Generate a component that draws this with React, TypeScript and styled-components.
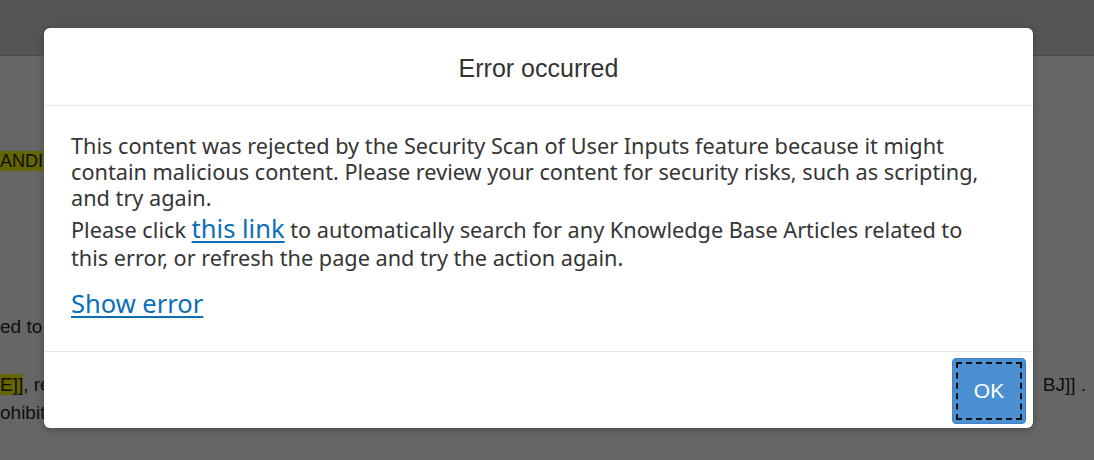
import React from "react";
import styled, { createGlobalStyle } from "styled-components";

const GlobalStyle = createGlobalStyle`
  html, body { margin: 0; padding: 0; background: #ffffff; }
  body { font-family: "Liberation Sans", Arial, sans-serif; }
  * { box-sizing: border-box; }
`;

const Page = styled.div`
  position: relative;
  width: 1094px;
  height: 460px;
  overflow: hidden;
  background: #ffffff;
  font-family: "Liberation Sans", Arial, sans-serif;
  color: #2a2a2a;
`;

const TopBar = styled.div`
  height: 56px;
  background: #d4d4d4;
  border-bottom: 1px solid #b8b8b8;
`;

const PageBody = styled.div`
  display: flex;
  flex-direction: column;
  font-size: 19px;
  line-height: 28px;
`;

const BgRow = styled.div<{ $top: number }>`
  display: flex;
  justify-content: space-between;
  margin-top: ${(p) => p.$top}px;
  height: 28px;
  white-space: nowrap;
`;

const RightFragment = styled.span`
  margin-right: 8px;
`;

const Mark = styled.span<{ $size?: number }>`
  background: #ffff00;
  font-size: ${(p) => (p.$size ? `${p.$size}px` : "inherit")};
`;

const Overlay = styled.div`
  position: absolute;
  inset: 0;
  background: rgba(0, 0, 0, 0.6);
  padding: 28px 61px 0 44px;
`;

const Dialog = styled.div`
  width: 989px;
  height: 400px;
  background: #ffffff;
  border-radius: 6px;
  box-shadow: 0 2px 8px rgba(0, 0, 0, 0.25);
  display: flex;
  flex-direction: column;
  overflow: hidden;
`;

const Header = styled.div`
  height: 78px;
  flex: none;
  display: flex;
  align-items: center;
  justify-content: center;
  padding-top: 4px;
  border-bottom: 1px solid #e6e6e6;
`;

const Title = styled.h1`
  margin: 0;
  font-family: "Liberation Sans", Arial, sans-serif;
  font-weight: normal;
  font-size: 25px;
  color: #333333;
`;

const Body = styled.div`
  flex: 1;
  padding: 27px 40px 0 27px;
  font-family: "Noto Sans", sans-serif;
  font-size: 21.7px;
  line-height: 26px;
  color: #353535;
`;

const Para = styled.p`
  margin: 0;
`;

const Link = styled.a`
  color: #0a6eb8;
  text-decoration: underline;
  text-underline-offset: 3px;
  font-size: 25.5px;
  line-height: 34px;
  cursor: pointer;
`;

const ShowError = styled.div`
  margin-top: 15px;
  font-size: 25.5px;
  line-height: 34px;
`;

const Footer = styled.div`
  height: 77px;
  flex: none;
  border-top: 1px solid #e6e6e6;
  display: flex;
  justify-content: flex-end;
  align-items: flex-start;
  padding: 6px 7px 0 0;
`;

const Button = styled.button`
  width: 74px;
  height: 66px;
  background: #4d90d1;
  border: 1px solid #3f82c6;
  border-radius: 4px;
  color: #ffffff;
  font-family: "Liberation Sans", Arial, sans-serif;
  font-size: 21px;
  position: relative;
  padding: 0;
  cursor: pointer;
  &::after {
    content: "";
    position: absolute;
    inset: 3px;
    border: 2px dashed #111111;
    border-radius: 1px;
  }
`;

export default function App() {
  return (
    <>
      <GlobalStyle />
      <Page>
        <TopBar />
        <PageBody>
          <BgRow $top={91}>
            <span>
              <Mark $size={18}>ANDI</Mark>
            </span>
          </BgRow>
          <BgRow $top={138}>
            <span>ed to</span>
          </BgRow>
          <BgRow $top={30}>
            <span>
              <Mark>E]]</Mark>, re
            </span>
            <RightFragment>BJ]] .</RightFragment>
          </BgRow>
          <BgRow $top={0}>
            <span>ohibit</span>
          </BgRow>
        </PageBody>
        <Overlay>
          <Dialog role="dialog" aria-labelledby="dlg-title">
            <Header>
              <Title id="dlg-title">Error occurred</Title>
            </Header>
            <Body>
              <Para>
                This content was rejected by the Security Scan of User Inputs feature because it might
                contain malicious content. Please review your content for security risks, such as
                scripting, and try again.
              </Para>
              <Para>
                Please click <Link>this link</Link> to automatically search for any Knowledge Base
                Articles related to this error, or refresh the page and try the action again.
              </Para>
              <ShowError>
                <Link>Show error</Link>
              </ShowError>
            </Body>
            <Footer>
              <Button>OK</Button>
            </Footer>
          </Dialog>
        </Overlay>
      </Page>
    </>
  );
}
